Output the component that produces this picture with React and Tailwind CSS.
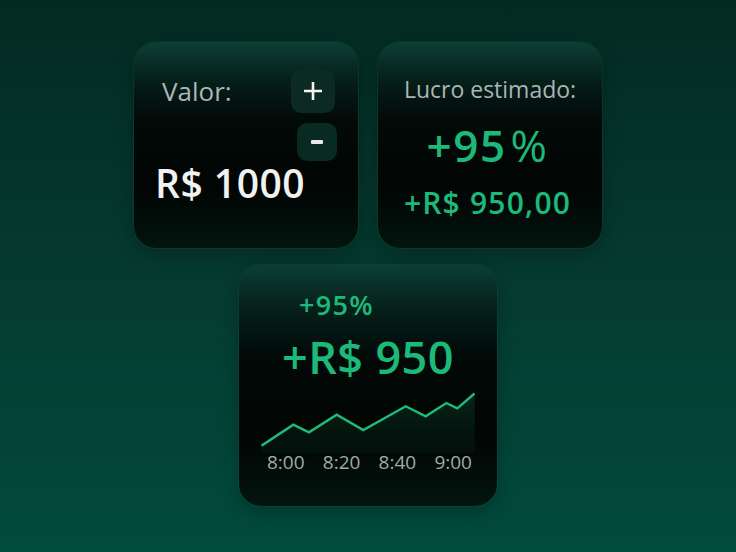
import React from "react";

const font = { fontFamily: '"Open Sans", "Noto Sans", sans-serif' };

const cardBg =
  "rounded-[22px] bg-[linear-gradient(180deg,#0c3e34_0%,#05201a_18%,#020a08_38%,#010504_70%,#03140f_100%)] shadow-[0_0_0_1px_rgba(40,110,90,0.18),0_6px_18px_rgba(0,0,0,0.25)]";

const points = [
  [0.5, 54.7],
  [32.3, 33.7],
  [48, 41.3],
  [75.7, 23.7],
  [102.3, 39],
  [144.7, 15.3],
  [164.7, 25.3],
  [185.3, 12],
  [196.3, 17.3],
  [213.5, 2.5],
];

function Chart() {
  const line = points.map((p) => p.join(",")).join(" ");
  const area = `0,62 ${line} 214,62`;
  return (
    <svg width="214" height="62" viewBox="0 0 214 62" className="block">
      <defs>
        <linearGradient id="fillG" x1="0" y1="0" x2="0" y2="1">
          <stop offset="0%" stopColor="#1db97a" stopOpacity="0.16" />
          <stop offset="100%" stopColor="#1db97a" stopOpacity="0.04" />
        </linearGradient>
      </defs>
      <polygon points={area} fill="url(#fillG)" />
      <polyline
        points={line}
        fill="none"
        stroke="#1fbb7b"
        strokeWidth="2.4"
        strokeLinejoin="miter"
      />
    </svg>
  );
}

export default function App() {
  return (
    <div
      style={font}
      className="w-[736px] h-[552px] overflow-hidden bg-[linear-gradient(180deg,#032a21_0%,#053a30_50%,#014b3d_100%)] flex flex-col items-center pt-[42px] gap-[17px]"
    >
      <div className="flex gap-[20px]">
        {/* Valor */}
        <div className={`w-[224px] h-[206px] ${cardBg} flex flex-col`}>
          <div className="flex items-center justify-between pl-[28px] pr-[23px] mt-[27px]">
            <span className="text-[26px] leading-none text-[#aab5b8]">Valor:</span>
            <button className="w-[44px] h-[44px] rounded-[10px] bg-[#0a2a22] text-[#f2f2f2] flex items-center justify-center">
              <svg width="20" height="20" viewBox="0 0 20 20">
                <path d="M10 1v18M1 10h18" stroke="#f4f4f4" strokeWidth="2.6" />
              </svg>
            </button>
          </div>
          <button className="self-end mr-[21px] mt-[10px] w-[40px] h-[38px] rounded-[10px] bg-[#082a21] flex items-center justify-center">
            <span className="block w-[12px] h-[4px] bg-[#e8e8e8] rounded-[1px]" />
          </button>
          <div className="pl-[21px] mt-[2px] text-[39px] leading-none font-semibold text-[#f1f1f1] tracking-[0.5px]">
            R$ 1000
          </div>
        </div>

        {/* Lucro estimado */}
        <div className={`w-[224px] h-[206px] ${cardBg} flex flex-col items-center`}>
          <div className="mt-[36px] text-[23px] leading-none text-[#aab5b8]">Lucro estimado:</div>
          <div className="mt-[22px] text-[44px] leading-none font-semibold text-[#1db97a] -ml-[5px] tracking-[1.5px]">
            +95<span className="font-normal ml-[4px]">%</span>
          </div>
          <div className="mt-[21px] text-[30px] leading-none font-semibold text-[#1db97a] -ml-[5px] tracking-[1.2px]">
            +R$ 950,00
          </div>
        </div>
      </div>

      {/* Chart card */}
      <div className={`w-[258px] h-[241px] ${cardBg} flex flex-col`}>
        <div className="pl-[60px] mt-[26px] text-[27px] leading-none font-semibold text-[#1db97a] tracking-[1.3px]">
          +95%
        </div>
        <div className="pl-[43px] mt-[16px] text-[45px] leading-none font-semibold text-[#1db97a] tracking-[0.4px]">
          +R$ 950
        </div>
        <div className="ml-[22px] mt-[12px]">
          <Chart />
        </div>
        <div className="flex justify-between pl-[28px] pr-[25px] text-[19px] leading-none text-[#a0aaab]">
          <span>8:00</span>
          <span>8:20</span>
          <span>8:40</span>
          <span>9:00</span>
        </div>
      </div>
    </div>
  );
}
